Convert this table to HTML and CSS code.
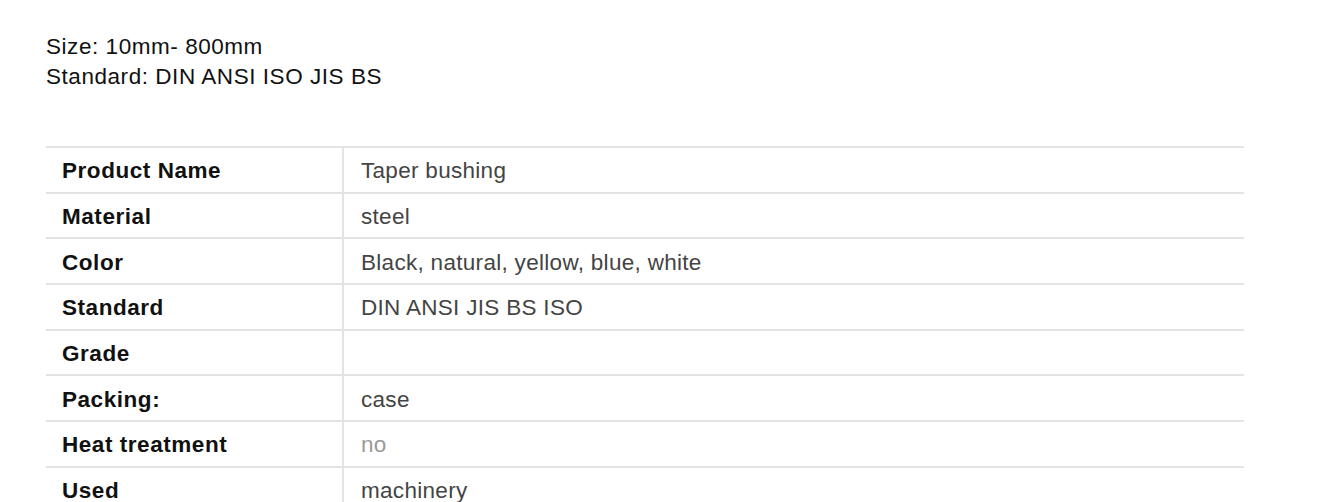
FILE: index.html
```html
<!DOCTYPE html>
<html>
<head>
<meta charset="utf-8">
<link rel="stylesheet" href="styles.css">
</head>
<body>
<div class="page">
  <div class="intro">
    <p>Size: 10mm- 800mm</p>
    <p>Standard: DIN ANSI ISO JIS BS</p>
  </div>
  <table class="spec">
    <tr><th>Product Name</th><td>Taper bushing</td></tr>
    <tr><th>Material</th><td>steel</td></tr>
    <tr><th>Color</th><td>Black, natural, yellow, blue, white</td></tr>
    <tr><th>Standard</th><td>DIN ANSI JIS BS ISO</td></tr>
    <tr><th>Grade</th><td></td></tr>
    <tr><th>Packing:</th><td>case</td></tr>
    <tr><th>Heat treatment</th><td class="muted">no</td></tr>
    <tr><th>Used</th><td>machinery</td></tr>
  </table>
</div>
</body>
</html>
```

FILE: styles.css
```css
html, body {
  margin: 0;
  padding: 0;
  background: #ffffff;
}
.page {
  padding: 32px 0 0 46px;
  font-family: "Liberation Sans", Arial, sans-serif;
}
.intro p {
  margin: 0;
  font-size: 22.5px;
  line-height: 30px;
  letter-spacing: 0.55px;
  color: #111111;
}
.spec {
  margin-top: 54px;
  width: 1198px;
  border-collapse: collapse;
  table-layout: fixed;
}
.spec tr {
  height: 45.7px;
}
.spec th, .spec td {
  border-top: 2px solid #e3e3e3;
  border-bottom: 2px solid #e3e3e3;
  padding: 3px 0 0 0;
  font-size: 22.5px;
  vertical-align: middle;
}
.spec th {
  width: 280px;
  padding-left: 16px;
  text-align: left;
  font-weight: bold;
  color: #111111;
  letter-spacing: 0.55px;
  border-right: 2px solid #e3e3e3;
}
.spec td {
  padding-left: 17px;
  color: #444444;
  letter-spacing: 0.3px;
}
.spec td.muted {
  color: #999999;
}
```
